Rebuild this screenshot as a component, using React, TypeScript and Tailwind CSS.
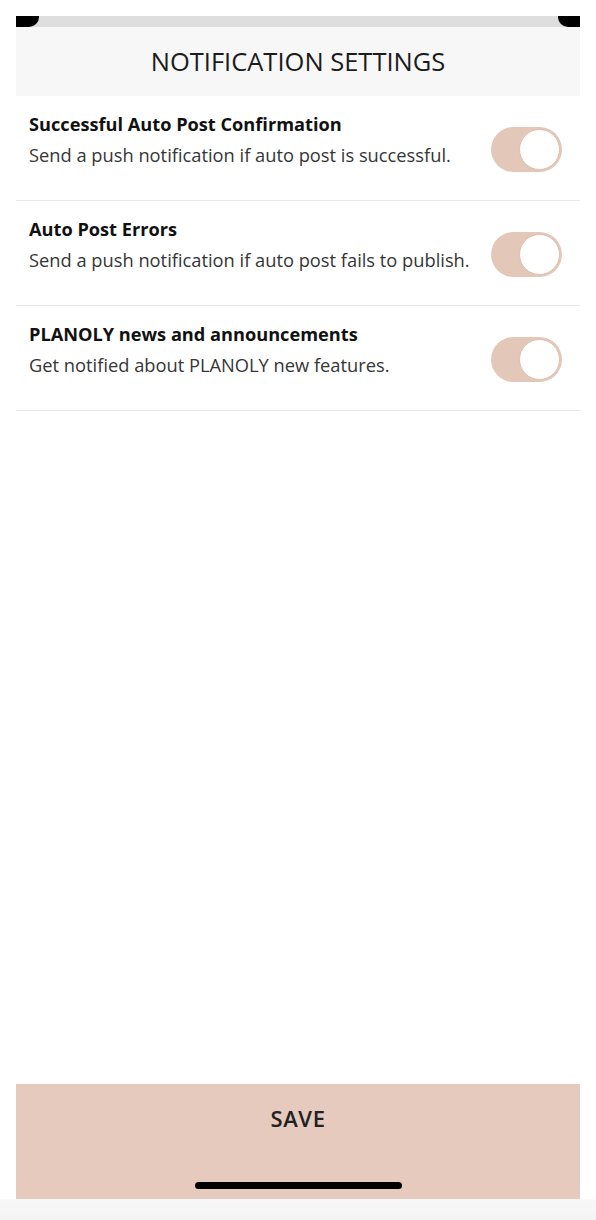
import React, { useState } from 'react';

const settings = [
  {
    id: 'success',
    title: 'Successful Auto Post Confirmation',
    desc: 'Send a push notification if auto post is successful.',
  },
  {
    id: 'errors',
    title: 'Auto Post Errors',
    desc: 'Send a push notification if auto post fails to publish.',
  },
  {
    id: 'news',
    title: 'PLANOLY news and announcements',
    desc: 'Get notified about PLANOLY new features.',
  },
];

const Toggle: React.FC<{ on: boolean; onChange: () => void }> = ({ on, onChange }) => (
  <button
    onClick={onChange}
    className={`relative h-[45px] w-[71px] shrink-0 rounded-full transition-colors ${
      on ? 'bg-[#e3c7b8]' : 'bg-[#e5e5e5]'
    }`}
  >
    <span
      className={`absolute top-[2px] h-[41px] w-[41px] rounded-full border-[1.5px] border-[#dcc0b0] bg-white transition-all ${
        on ? 'left-[28px]' : 'left-[2px]'
      }`}
    />
  </button>
);

export default function App() {
  const [values, setValues] = useState<Record<string, boolean>>({
    success: true,
    errors: true,
    news: true,
  });

  const toggle = (id: string) => setValues((v) => ({ ...v, [id]: !v[id] }));

  return (
    <div
      className="flex h-[1220px] w-full flex-col bg-white"
      style={{ fontFamily: '"Open Sans", "Noto Sans", sans-serif' }}
    >
      <div className="mx-[16px] flex flex-1 flex-col pt-[16px]">
        {/* status bar edge with rounded screen corners */}
        <div className="flex h-[11px] bg-[#dedede]">
          <div className="h-full w-[23px] rounded-br-[10px] bg-black" />
          <div className="flex-1" />
          <div className="h-full w-[22px] rounded-bl-[10px] bg-black" />
        </div>

        <div className="flex h-[69px] items-center justify-center bg-[#f7f7f7]">
          <h1 className="text-[25.5px] leading-none font-medium text-[#1c1c1c]">
            NOTIFICATION SETTINGS
          </h1>
        </div>

        {settings.map((s) => (
          <div
            key={s.id}
            className="flex h-[105px] items-start justify-between border-b border-[#e8e8e8] pl-[13px] pr-[18px]"
          >
            <div className="flex flex-col pt-[16px]">
              <span className="text-[18.2px] leading-[24px] font-bold text-[#111]">{s.title}</span>
              <span className="mt-[6px] text-[18.3px] leading-[26px] text-[#363636]">{s.desc}</span>
            </div>
            <div className="mt-[31px]">
              <Toggle on={values[s.id]} onChange={() => toggle(s.id)} />
            </div>
          </div>
        ))}

        <div className="flex-1" />

        <button className="flex h-[115px] flex-col items-center bg-[#e5cabd] pt-[18px]">
          <span className="text-[22px] font-semibold tracking-[0.6px] text-[#222]">SAVE</span>
          <span className="mt-auto mb-[10px] h-[7px] w-[207px] rounded-full bg-black" />
        </button>
      </div>
      <div className="h-[21px] bg-gradient-to-b from-[#f8f8f8] to-[#f4f4f4]" />
    </div>
  );
}
